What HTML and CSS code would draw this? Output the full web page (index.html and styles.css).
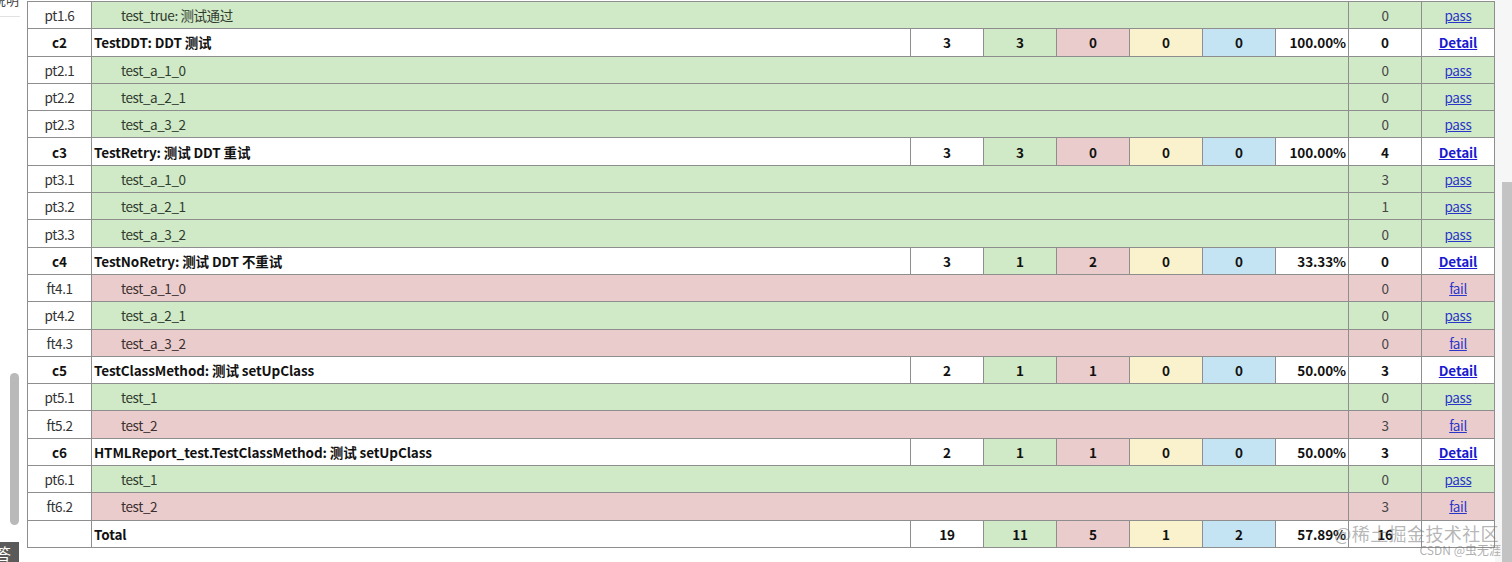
FILE: index.html
```html
<!DOCTYPE html>
<html lang="zh">
<head>
<meta charset="utf-8">
<link rel="stylesheet" href="styles.css">
</head>
<body>
<div class="page">
  <aside class="side">
    <div class="side-top"><span>说明</span></div>
    <div class="side-track"><div class="side-thumb"></div></div>
    <div class="side-btn"><span>答</span></div>
  </aside>
  <main class="main">
    <table class="report">
      <colgroup>
        <col class="c-id"><col class="c-name">
        <col class="c-num"><col class="c-num"><col class="c-num"><col class="c-num">
        <col class="c-num"><col class="c-num"><col class="c-num"><col class="c-num">
      </colgroup>
      <tbody>
        <tr class="case pass"><td class="id">pt1.6</td><td class="tname" colspan="7">test_true: 测试通过</td><td class="num">0</td><td class="lnk"><a href="#">pass</a></td></tr>

        <tr class="cls"><td class="id">c2</td><td class="cname">TestDDT: DDT 测试</td><td>3</td><td class="g">3</td><td class="r">0</td><td class="y">0</td><td class="b">0</td><td class="rate">100.00%</td><td>0</td><td><a href="#">Detail</a></td></tr>
        <tr class="case pass"><td class="id">pt2.1</td><td class="tname" colspan="7">test_a_1_0</td><td class="num">0</td><td class="lnk"><a href="#">pass</a></td></tr>
        <tr class="case pass"><td class="id">pt2.2</td><td class="tname" colspan="7">test_a_2_1</td><td class="num">0</td><td class="lnk"><a href="#">pass</a></td></tr>
        <tr class="case pass"><td class="id">pt2.3</td><td class="tname" colspan="7">test_a_3_2</td><td class="num">0</td><td class="lnk"><a href="#">pass</a></td></tr>

        <tr class="cls"><td class="id">c3</td><td class="cname">TestRetry: 测试 DDT 重试</td><td>3</td><td class="g">3</td><td class="r">0</td><td class="y">0</td><td class="b">0</td><td class="rate">100.00%</td><td>4</td><td><a href="#">Detail</a></td></tr>
        <tr class="case pass"><td class="id">pt3.1</td><td class="tname" colspan="7">test_a_1_0</td><td class="num">3</td><td class="lnk"><a href="#">pass</a></td></tr>
        <tr class="case pass"><td class="id">pt3.2</td><td class="tname" colspan="7">test_a_2_1</td><td class="num">1</td><td class="lnk"><a href="#">pass</a></td></tr>
        <tr class="case pass"><td class="id">pt3.3</td><td class="tname" colspan="7">test_a_3_2</td><td class="num">0</td><td class="lnk"><a href="#">pass</a></td></tr>

        <tr class="cls"><td class="id">c4</td><td class="cname">TestNoRetry: 测试 DDT 不重试</td><td>3</td><td class="g">1</td><td class="r">2</td><td class="y">0</td><td class="b">0</td><td class="rate">33.33%</td><td>0</td><td><a href="#">Detail</a></td></tr>
        <tr class="case fail"><td class="id">ft4.1</td><td class="tname" colspan="7">test_a_1_0</td><td class="num">0</td><td class="lnk"><a href="#">fail</a></td></tr>
        <tr class="case pass"><td class="id">pt4.2</td><td class="tname" colspan="7">test_a_2_1</td><td class="num">0</td><td class="lnk"><a href="#">pass</a></td></tr>
        <tr class="case fail"><td class="id">ft4.3</td><td class="tname" colspan="7">test_a_3_2</td><td class="num">0</td><td class="lnk"><a href="#">fail</a></td></tr>

        <tr class="cls"><td class="id">c5</td><td class="cname">TestClassMethod: 测试 setUpClass</td><td>2</td><td class="g">1</td><td class="r">1</td><td class="y">0</td><td class="b">0</td><td class="rate">50.00%</td><td>3</td><td><a href="#">Detail</a></td></tr>
        <tr class="case pass"><td class="id">pt5.1</td><td class="tname" colspan="7">test_1</td><td class="num">0</td><td class="lnk"><a href="#">pass</a></td></tr>
        <tr class="case fail"><td class="id">ft5.2</td><td class="tname" colspan="7">test_2</td><td class="num">3</td><td class="lnk"><a href="#">fail</a></td></tr>

        <tr class="cls"><td class="id">c6</td><td class="cname">HTMLReport_test.TestClassMethod: 测试 setUpClass</td><td>2</td><td class="g">1</td><td class="r">1</td><td class="y">0</td><td class="b">0</td><td class="rate">50.00%</td><td>3</td><td><a href="#">Detail</a></td></tr>
        <tr class="case pass"><td class="id">pt6.1</td><td class="tname" colspan="7">test_1</td><td class="num">0</td><td class="lnk"><a href="#">pass</a></td></tr>
        <tr class="case fail"><td class="id">ft6.2</td><td class="tname" colspan="7">test_2</td><td class="num">3</td><td class="lnk"><a href="#">fail</a></td></tr>

        <tr class="cls total"><td class="id"></td><td class="cname">Total</td><td>19</td><td class="g">11</td><td class="r">5</td><td class="y">1</td><td class="b">2</td><td class="rate">57.89%</td><td>16</td><td></td></tr>
      </tbody>
    </table>
    <div class="watermark">
      <span class="wm-main">@稀土掘金技术社区</span>
      <span class="wm-sub">CSDN @虫无涯</span>
    </div>
  </main>
  <div class="vscroll"><div class="vthumb"></div></div>
</div>
</body>
</html>
```

FILE: styles.css
```css
html, body {
  margin: 0;
  padding: 0;
  background: #fff;
  overflow: hidden;
}
body {
  font-family: "Noto Sans CJK SC", "Noto Sans", sans-serif;
  font-size: 13px;
  color: #333;
}
.page {
  display: flex;
  width: 1512px;
  height: 562px;
}

/* left side panel */
.side {
  flex: none;
  width: 27px;
  display: flex;
  flex-direction: column;
  overflow: hidden;
}
.side-top {
  width: 20px;
  height: 16px;
  border-bottom: 1px solid #e2e2e2;
  overflow: hidden;
}
.side-top span {
  display: block;
  margin-top: -9px;
  margin-left: -7px;
  font-size: 13px;
  line-height: 18px;
  white-space: nowrap;
  color: #444;
}
.side-track {
  flex: 1;
  display: flex;
  flex-direction: column;
  justify-content: flex-end;
  padding: 0 0 17px 10px;
}
.side-thumb {
  width: 9px;
  height: 152px;
  border-radius: 5px;
  background: #b9b9b9;
}
.side-btn {
  width: 19px;
  height: 20px;
  background: #5a5a5a;
  overflow: hidden;
}
.side-btn span {
  display: block;
  margin-left: -5px;
  color: #fff;
  font-size: 16px;
  line-height: 22px;
}

/* main table */
.main {
  flex: none;
  width: 1468px;
  padding-top: 1px;
  position: relative;
}
.report {
  border-collapse: collapse;
  table-layout: fixed;
  border: 1px solid #8e8e8e;
}
.c-id { width: 64px; }
.c-name { width: 819px; }
.c-num { width: 73px; }
.report tr { height: 27.3px; }
.report td {
  border: 1px solid #8e8e8e;
  padding: 0 2px;
  text-align: center;
  white-space: nowrap;
  overflow: hidden;
  line-height: 18px;
  font-size: 13.5px;
}
.report td.id { color: #333; background: #fff; }

.case td { letter-spacing: -0.4px; }
.cls td { font-weight: bold; color: #111; background: #fff; letter-spacing: -0.1px; }
.cls td.cname { text-align: left; padding-left: 2px; }
.cls td.g { background: #d0e9c6; }
.cls td.r { background: #ebcccc; }
.cls td.y { background: #faf2cc; }
.cls td.b { background: #c4e3f3; }
.cls td.rate { text-align: right; padding-right: 2px; }
.cls td.id { color: #111; }

.case td.tname { text-align: left; padding-left: 29px; color: #2f3a2f; }
.case td.num { color: #444; }
.case.pass td.tname, .case.pass td.num, .case.pass td.lnk { background: #d0e9c6; }
.case.fail td.tname, .case.fail td.num, .case.fail td.lnk { background: #ebcccc; }
.case.fail td.tname { color: #3a2f2f; }

a { color: #2a36c8; text-decoration: underline; }
.cls a { color: #1a1ad0; }

/* watermark */
.watermark {
  position: absolute;
  right: -6px;
  bottom: 6px;
  display: flex;
  flex-direction: column;
  align-items: flex-end;
  pointer-events: none;
}
.wm-main {
  font-size: 18px;
  line-height: 22px;
  color: rgba(120, 120, 120, 0.55);
  letter-spacing: 0.4px;
  margin-right: 2px;
}
.wm-sub {
  font-size: 12px;
  line-height: 12px;
  color: rgba(120, 120, 120, 0.6);
}

/* right scrollbar */
.vscroll {
  flex: 1;
  background: #f6f6f6;
  display: flex;
  flex-direction: column;
  align-items: flex-end;
  padding-top: 182px;
}
.vthumb {
  flex: 1;
  width: 10px;
  background: #c3c3c3;
}
```
